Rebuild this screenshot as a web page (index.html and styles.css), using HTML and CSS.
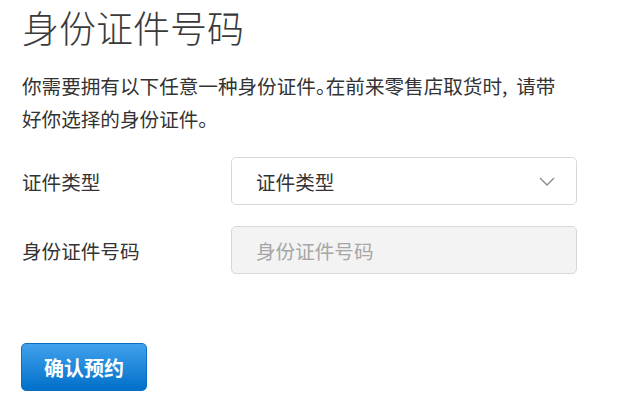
FILE: index.html
```html
<!DOCTYPE html>
<html lang="zh-CN">
<head>
<meta charset="utf-8">
<title>身份证件号码</title>
<link rel="stylesheet" href="styles.css">
</head>
<body>
<main class="page">
  <h1 class="title">身份证件号码</h1>
  <p class="intro">你需要拥有以下任意一种身份证件。在前来零售店取货时,&nbsp;&nbsp;请带好你选择的身份证件。</p>
  <form class="form">
    <div class="row">
      <label class="label">证件类型</label>
      <div class="select">
        <span class="select-text">证件类型</span>
        <svg class="chevron" width="16" height="9" viewBox="0 0 16 9"><path d="M1 1 L8 8 L15 1" fill="none" stroke="#8a8a8a" stroke-width="1.4"/></svg>
      </div>
    </div>
    <div class="row">
      <label class="label">身份证件号码</label>
      <div class="input"><span class="placeholder">身份证件号码</span></div>
    </div>
    <div class="actions">
      <button type="button" class="btn">确认预约</button>
    </div>
  </form>
</main>
</body>
</html>
```

FILE: styles.css
```css
html, body {
  margin: 0;
  padding: 0;
  background: #ffffff;
}
body {
  font-family: "Noto Sans CJK SC", "Noto Sans", sans-serif;
  color: #333333;
}
.page {
  padding: 5px 22px 0 22px;
}
.title {
  margin: 0;
  font-size: 37px;
  line-height: 44px;
  font-weight: 300;
  color: #3a3a3a;
}
.intro {
  margin: 20px 0 0 0;
  width: 548px;
  font-size: 19.6px;
  line-height: 33px;
  font-feature-settings: "halt";
  color: #333333;
}
.form {
  margin-top: 22px;
}
.row {
  display: grid;
  grid-template-columns: 209px 346px;
  align-items: center;
  margin-bottom: 21px;
}
.label {
  font-size: 19.6px;
  color: #333333;
}
.select, .input {
  box-sizing: border-box;
  height: 48px;
  border: 1px solid #d8d8d8;
  border-radius: 5px;
  display: flex;
  align-items: center;
  padding: 0 21px 0 24px;
  font-size: 19.6px;
}
.select {
  justify-content: space-between;
  background: #ffffff;
}
.select-text {
  color: #333333;
}
.input {
  background: #f3f3f3;
}
.placeholder {
  color: #a6a6a6;
}
.actions {
  padding-top: 48px;
}
.btn {
  margin-left: -1px;
  width: 126px;
  height: 48px;
  border: 1px solid #0a6fc4;
  border-radius: 5px;
  background: linear-gradient(#42a1ec, #0070c9);
  color: #ffffff;
  font-family: "Noto Sans CJK SC", sans-serif;
  font-size: 20px;
  font-weight: 700;
  padding: 0;
}
```
